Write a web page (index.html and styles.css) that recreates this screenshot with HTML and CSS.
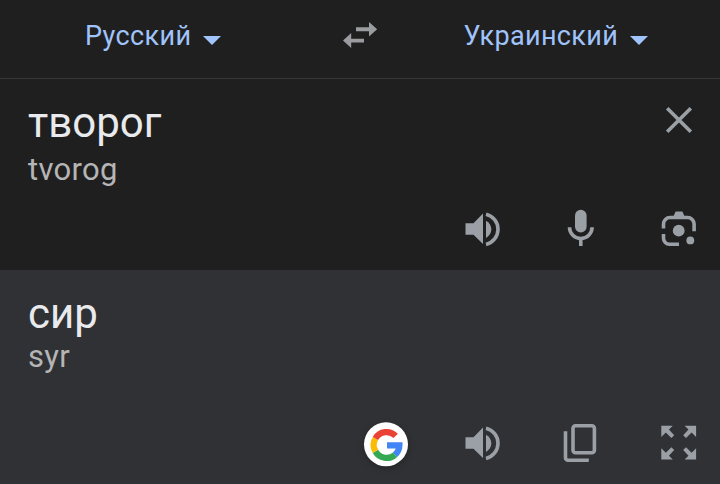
FILE: index.html
```html
<!DOCTYPE html>
<html lang="ru">
<head>
    <meta charset="UTF-8">
    <meta name="viewport" content="width=device-width, initial-scale=1.0">
    <title>Переводчик</title>
    <link rel="stylesheet" href="styles.css">
</head>
<body>
    <div class="translator">
        <header class="languages">
            <div class="lang lang-from">
                <span class="lang-name">Русский</span>
                <span class="caret"></span>
            </div>
            <svg class="swap" viewBox="0 0 36 28">
                <path d="M14 6.300h13V1l8.200 7.300-8.200 7.300v-5.400H14zM22 21.600H9.200V27L1 19.600 9.200 12v5.700H22z"/>
            </svg>
            <div class="lang lang-to">
                <span class="lang-name">Украинский</span>
                <span class="caret"></span>
            </div>
        </header>

        <section class="panel source">
            <div class="entry">
                <div>
                    <div class="word">творог</div>
                    <div class="translit">tvorog</div>
                </div>
                <svg class="icon" viewBox="0 0 48 48">
                    <path class="line" d="M12.200 12.200l23.600 23.600M35.800 12.200L12.200 35.800"/>
                </svg>
            </div>
            <div class="actions">
                <svg class="icon" viewBox="0 0 48 48">
                    <path d="M6.500 18.300h8l9.500-9.700v30.500l-9.500-9.400h-8z"/>
                    <path d="M27 15.700c3.200 1.600 5.300 4.900 5.300 8.600s-2.100 7-5.300 8.600z"/>
                    <path class="line" d="M27 9.200a15.500 15.500 0 0 1 0 30.200"/>
                </svg>
                <svg class="icon" viewBox="0 0 48 48">
                    <rect x="18" y="4.700" width="11.600" height="22.800" rx="5.800"/>
                    <path class="line" d="M12.500 22.300a11.300 11.300 0 0 0 22.600 0M23.800 33.500V41"/>
                </svg>
                <svg class="icon" viewBox="0 0 48 48">
                    <path class="line" d="M8.500 23.600V19a6.500 6.500 0 0 1 6.500-6.500h17.600a6.500 6.500 0 0 1 6.500 6.500v7.200M8.500 29v4.200a6 6 0 0 0 6 6H24"/>
                    <path d="M18 12.500l2.600-6h6.800l2.600 6z"/>
                    <circle cx="23.700" cy="25.700" r="5.900"/>
                    <circle cx="35.300" cy="35.400" r="3.900"/>
                </svg>
            </div>
        </section>

        <section class="panel target">
            <div class="entry">
                <div>
                    <div class="word">сир</div>
                    <div class="translit">syr</div>
                </div>
            </div>
            <div class="actions">
                <svg class="icon google" viewBox="0 0 48 48">
                    <circle cx="25" cy="25.300" r="22" fill="#fff"/>
                    <g fill="none" stroke-width="6.200">
                        <path stroke="#4285f4" d="M26 26.300h12.400a12.900 12.900 0 0 1-4.500 9.600"/>
                        <path stroke="#34a853" d="M34 35.800a12.900 12.900 0 0 1-19.600-3.400"/>
                        <path stroke="#fbbc05" d="M14.400 32.400a12.900 12.900 0 0 1 0-12.900"/>
                        <path stroke="#ea4335" d="M14.400 19.500a12.900 12.900 0 0 1 20.300-2.600"/>
                    </g>
                </svg>
                <svg class="icon" viewBox="0 0 48 48">
                    <path d="M6.500 18.300h8l9.500-9.700v30.500l-9.500-9.400h-8z"/>
                    <path d="M27 15.700c3.200 1.600 5.300 4.900 5.300 8.600s-2.100 7-5.300 8.600z"/>
                    <path class="line" d="M27 9.200a15.500 15.500 0 0 1 0 30.200"/>
                </svg>
                <svg class="icon" viewBox="0 0 48 48">
                    <rect class="line" x="16" y="6.700" width="21.400" height="27" rx="2.500"/>
                    <path class="line" d="M8.500 12.300v26.400a2.500 2.500 0 0 0 2.500 2.500h20.800"/>
                </svg>
                <svg class="icon" viewBox="0 0 48 48">
                    <path id="arrow" d="M6.300 6.700h11.500l-3.900 3.900 5.300 5.700-2.800 2.800-5.600-5.500-4.500 4.400z"/>
                    <use href="#arrow" transform="matrix(-1 0 0 1 47.400 0)"/>
                    <use href="#arrow" transform="matrix(1 0 0 -1 0 47.300)"/>
                    <use href="#arrow" transform="matrix(-1 0 0 -1 47.400 47.300)"/>
                </svg>
            </div>
        </section>
    </div>
</body>
</html>
```
FILE: styles.css
```css
* {
    margin: 0;
    padding: 0;
    box-sizing: border-box;
}

body {
    background: #1f1f1f;
    font-family: Roboto, "Noto Sans", sans-serif;
}

.translator {
    display: grid;
    grid-template-rows: 79px 191px 214px;
    height: 484px;
    overflow: hidden;
}

/* языки */
.languages {
    display: grid;
    grid-template-columns: 1fr 36px 1fr;
    padding: 0 2px 8px 1px;
    align-items: center;
    border-bottom: 1px solid #343837;
}

.lang {
    display: flex;
    align-items: center;
    color: #a0c3fa;
    font-size: 27px;
    line-height: 32px;
}

.lang-from {
    padding-left: 84px;
}

.lang-to {
    padding-left: 86px;
}

.lang-name {
    padding-top: 2px;
    letter-spacing: 0.35px;
}

.caret {
    margin: 10px 0 0 12px;
    border: 9px solid transparent;
    border-top-color: #a0c3fa;
    border-bottom: 0;
}

.swap {
    width: 36px;
    height: 28px;
    fill: #9a9ca0;
}

/* панели с текстом */
.panel {
    display: flex;
    flex-direction: column;
    justify-content: space-between;
    padding: 17px 17px 17px 28px;
}

.target {
    background: #303134;
}

.entry {
    display: flex;
    justify-content: space-between;
}

.word {
    color: #e8eaed;
    font-size: 42px;
    line-height: 54px;
}

.translit {
    color: #b5b5b5;
    font-size: 31px;
    line-height: 40px;
    letter-spacing: 0.3px;
}

.target .word {
    line-height: 53px;
}

.target .translit {
    line-height: 34px;
}

.actions {
    display: flex;
    justify-content: flex-end;
    gap: 50px;
}

.icon {
    width: 48px;
    height: 48px;
    fill: #9aa0a6;
}

.google {
    filter: drop-shadow(0 2px 3px rgba(0, 0, 0, 0.25));
}

.line {
    fill: none;
    stroke: #9aa0a6;
    stroke-width: 3.6;
}
```
